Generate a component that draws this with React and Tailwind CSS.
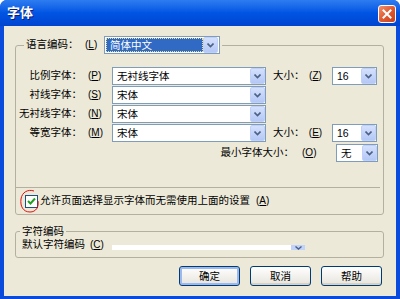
import React from 'react';

const Arrow = () => (
  <svg width="7" height="5" viewBox="0 0 7 5">
    <path d="M0.5 0.5 L3.5 3.5 L6.5 0.5" fill="none" stroke="#4D6185" strokeWidth="1.6" />
  </svg>
);

const DropButton = () => (
  <div className="w-[15px] h-[16px] shrink-0 flex items-center justify-center rounded-[2px] border border-[#C0D0F8] bg-gradient-to-b from-[#D4E0FC] to-[#B4C8F6]">
    <Arrow />
  </div>
);

// combo box, text on white with the xp arrow button
const Combo = ({ text, width }) => (
  <div className={`${width} h-[18px] shrink-0 flex items-center border border-[#7F9DB9] bg-white`}>
    <span className="flex-1 pl-[4px] leading-none whitespace-nowrap">{text}</span>
    <DropButton />
  </div>
);

const Mn = ({ k }) => (
  <span className="text-[10px]">
    (<span className="underline">{k}</span>)
  </span>
);

const FontRow = ({ label, k, value, size, sizeKey }) => (
  <div className="flex items-center h-[18px] whitespace-nowrap">
    <span className="w-[66px] text-right">{label}</span>
    <span className="ml-[6px] w-[20px]"><Mn k={k} /></span>
    <Combo text={value} width="ml-[4px] w-[154px]" />
    {size && (
      <>
        <span className="ml-[7px] w-[32px]">大小：</span>
        <span className="w-[21px] text-center"><Mn k={sizeKey} /></span>
        <Combo text={size} width="ml-[6px] w-[45px]" />
      </>
    )}
  </div>
);

const XpButton = ({ children, isDefault }) => (
  <button
    className={`w-[61px] h-[20px] rounded-[3px] border border-[#003C74] bg-gradient-to-b from-white to-[#E6E4DC] leading-none ${
      isDefault ? 'shadow-[inset_0_0_0_2px_#9CB8EC]' : 'shadow-[inset_0_-2px_0_#D6D0C5]'
    }`}
  >
    {children}
  </button>
);

export default function App() {
  return (
    <div className="w-[400px] h-[299px] flex flex-col bg-[#0A4BDC] rounded-t-[7px] overflow-hidden text-[10.5px] text-black font-['Liberation_Sans','Noto_Sans_CJK_SC',sans-serif]">
      {/* title bar */}
      <div className="h-[26px] shrink-0 flex items-center justify-between pl-[7px] pr-[4px] bg-gradient-to-b from-[#2E7CF0] via-[#0054E3] to-[#0044D0]">
        <span className="text-white font-bold text-[13px] [text-shadow:1px_1px_0_#0A1E7A]">字体</span>
        <div className="w-[18px] h-[18px] mt-[1px] rounded-[3px] border border-white bg-gradient-to-br from-[#F0906A] via-[#E05A30] to-[#C8401C] flex items-center justify-center">
          <svg width="10" height="10" viewBox="0 0 10 10">
            <path d="M1.5 1.5 L8.5 8.5 M8.5 1.5 L1.5 8.5" stroke="white" strokeWidth="2" strokeLinecap="square" />
          </svg>
        </div>
      </div>

      {/* client area */}
      <div className="flex-1 mx-[4px] mb-[3px] bg-[#ECE9D8] flex flex-col pl-[11px] pr-[12px]">
        <fieldset className="mt-[10px] border border-[#B3B09F] rounded-[3px] pb-[6px]">
          <legend className="ml-[8px] px-[2px]">
            <div className="flex items-center h-[18px] whitespace-nowrap">
              <span className="w-[56px]">语言编码：</span>
              <span className="ml-[3px] w-[18px]"><Mn k="L" /></span>
              <div className="ml-[1px] w-[116px] h-[18px] flex items-center border border-[#7F9DB9] bg-white p-[1px]">
                <div className="flex-1 h-full bg-[#316AC5] border border-dotted border-[#F0E080] text-white flex items-center pl-[3px] leading-none">
                  简体中文
                </div>
                <DropButton />
              </div>
            </div>
          </legend>

          <div className="mt-[13px] flex flex-col gap-[1px]">
            <FontRow label="比例字体：" k="P" value="无衬线字体" size="16" sizeKey="Z" />
            <FontRow label="衬线字体：" k="S" value="宋体" />
            <FontRow label="无衬线字体：" k="N" value="宋体" />
            <FontRow label="等宽字体：" k="M" value="宋体" size="16" sizeKey="E" />
            <div className="mt-[1px] flex items-center justify-end h-[18px] pr-[5px] whitespace-nowrap">
              <span>最小字体大小：</span>
              <span className="ml-[8px] w-[20px]"><Mn k="O" /></span>
              <Combo text="无" width="ml-[14px] w-[42px]" />
            </div>
          </div>

          <div className="mt-[25px] mr-[3px] h-[1px] bg-[#B3B09F]" />

          <div className="relative mt-[6px] flex items-center h-[14px] pl-[9px] whitespace-nowrap">
            <div className="w-[13px] h-[13px] border border-[#1C5180] bg-white flex items-center justify-center">
              <svg width="9" height="8" viewBox="0 0 9 8">
                <path d="M1 4 L3.5 6.5 L8 1.5" fill="none" stroke="#21A121" strokeWidth="2" />
              </svg>
            </div>
            <span className="ml-[2px]">允许页面选择显示字体而无需使用上面的设置</span>
            <span className="ml-[6px]"><Mn k="A" /></span>
            <svg className="absolute left-[3px] top-[-5px]" width="21" height="25" viewBox="0 0 21 25">
              <path d="M15 2 C9 0 3 3 2 10 C1 17 4 23 11 23 C17 23 20 18 19 12" fill="none" stroke="#E01010" strokeWidth="1" />
            </svg>
          </div>
        </fieldset>

        <fieldset className="mt-[9px] border border-[#B3B09F] rounded-[3px] pb-[5px]">
          <legend className="ml-[4px] px-[2px] leading-[14px]">字符编码</legend>
          <div className="flex items-center h-[14px] pl-[6px] whitespace-nowrap">
            <span className="w-[66px]">默认字符编码</span>
            <span className="ml-[2px] w-[22px]"><Mn k="C" /></span>
            <div className="mt-[5px] w-[193px] h-[5px] flex bg-white">
              <div className="flex-1" />
              <div className="w-[14px] h-full bg-[#C1D3FB] flex items-center justify-center">
                <svg width="7" height="4" viewBox="0 0 7 4">
                  <path d="M0.5 0.5 L3.5 3 L6.5 0.5" fill="none" stroke="#4D6185" strokeWidth="1.4" />
                </svg>
              </div>
            </div>
          </div>
        </fieldset>

        <div className="mt-[8px] flex justify-end gap-[10px] pr-[2px]">
          <XpButton isDefault>确定</XpButton>
          <XpButton>取消</XpButton>
          <XpButton>帮助</XpButton>
        </div>
      </div>
    </div>
  );
}
